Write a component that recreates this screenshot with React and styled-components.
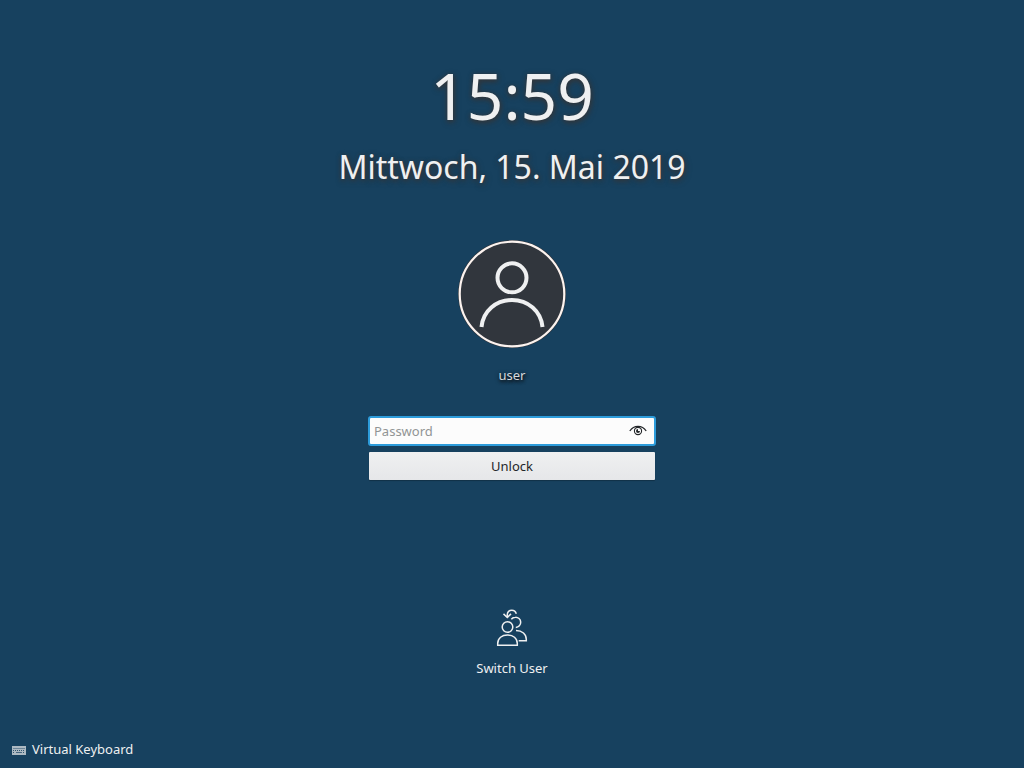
import React from "react";
import styled, { createGlobalStyle } from "styled-components";

const GlobalStyle = createGlobalStyle`
  * { box-sizing: border-box; }
  body { margin: 0; background: #17415f; }
  button, input {
    font: inherit;
    margin: 0;
  }
`;

const Screen = styled.main`
  min-height: 100vh;
  display: flex;
  flex-direction: column;
  align-items: center;
  padding-top: 52px;
  background: #17415f;
  color: #eff0f1;
  font-family: "Noto Sans", sans-serif;
  font-size: 13px;
  line-height: 18px;
`;

const Clock = styled.header`
  display: flex;
  flex-direction: column;
  align-items: center;
  text-shadow: 1px 2px 6px #31363b, 0 1px 4px #31363b;
`;

const Time = styled.time`
  font-size: 64px;
  line-height: 88px;
`;

const DateText = styled.time`
  font-size: 32px;
  line-height: 54px;
`;

const Account = styled.section`
  display: flex;
  flex-direction: column;
  align-items: center;
  gap: 18px;
  margin-top: 46px;
`;

const AvatarDrawing = styled.svg`
  display: block;
  width: 108px;
  height: 108px;
`;

const UserName = styled.span`
  color: #d5d9dd;
  text-shadow: 1px 2px 3px #10171d, 0 1px 4px #10171d;
`;

const LoginForm = styled.form`
  display: flex;
  flex-direction: column;
  gap: 6px;
  width: 288px;
  max-width: 100%;
  margin-top: 32px;
`;

const Field = styled.div`
  display: flex;
  align-items: center;
  height: 30px;
  padding: 0 7px 0 4px;
  border: 2px solid #2d9cdb;
  border-radius: 3px;
  background: #fcfcfc;
`;

const PasswordInput = styled.input`
  flex: 1;
  min-width: 0;
  height: 26px;
  padding: 0;
  border: 0;
  outline: 0;
  background: transparent;
  color: #232629;
  &::placeholder { color: #919495; opacity: 1; }
`;

const RevealButton = styled.button`
  display: flex;
  padding: 0;
  border: 0;
  background: none;
  color: #232629;
`;

const UnlockButton = styled.button`
  height: 28px;
  margin: 0 1px;
  padding: 0;
  border: 0;
  border-radius: 1px;
  background: linear-gradient(#eff0f1, #e6e7e9);
  box-shadow: 0 1px 1px rgba(0, 0, 0, 0.25);
  color: #232629;
`;

const Spacer = styled.div`
  flex: 1;
`;

const ActionButton = styled.button`
  display: flex;
  flex-direction: column;
  align-items: center;
  gap: 11px;
  padding: 0;
  border: 0;
  background: none;
  color: inherit;
`;

const BottomBar = styled.footer`
  align-self: stretch;
  display: flex;
  margin-top: 63px;
  padding: 0 12px 10px;
`;

const KeyboardButton = styled.button`
  display: flex;
  align-items: center;
  gap: 6px;
  padding: 0;
  border: 0;
  background: none;
  color: inherit;
`;

const Avatar = () => (
  <AvatarDrawing viewBox="0 0 108 108" fill="none" aria-hidden="true">
    <circle cx="54" cy="54" r="54" fill="#31363d" />
    <circle cx="54" cy="54" r="52.3" stroke="#fcf3ef" strokeWidth="2.200" />
    <circle cx="54" cy="37.800" r="14.500" stroke="#eff0f1" strokeWidth="4" />
    <path d="M23.500 87C25 71 38 60 54 60S83 71 84.500 87" stroke="#eff0f1" strokeWidth="4" />
  </AvatarDrawing>
);

const EyeIcon = () => (
  <svg width="18" height="14" viewBox="0 0 18 14" fill="none" aria-hidden="true">
    <path d="M.8 7C3 3.600 5.700 2.300 9 2.300S15 3.600 17.200 7" stroke="currentColor" strokeWidth="1.200" />
    <circle cx="9" cy="7" r="3.600" stroke="currentColor" strokeWidth="1.100" />
    <path d="M9 5A2 2 0 1 0 11 7H9Z" fill="currentColor" />
  </svg>
);

const SwitchUserIcon = () => (
  <svg width="32" height="40" viewBox="0 0 32 40" fill="none" stroke="currentColor" strokeWidth="1.500" aria-hidden="true">
    <circle cx="11.500" cy="19" r="5.300" />
    <path d="M1.700 37.300V35.500C1.700 30.300 5.900 27 11.500 27S21.300 30.300 21.300 35.500V37.300Z" />
    <path d="M15.300 11.200C16.500 9.800 18 9.200 19.400 9.200A5.100 5.100 0 0 1 19.800 19.400" />
    <path d="M20 22.400C26.200 22.400 30.300 26.400 30.300 31.400V32.800H22.700" />
    <path d="M20.300 5.800C19.700 3.700 18 2.200 15.800 2.200C13.200 2.200 11.300 4 11.300 6.500V9.200M7.500 5.900L11.300 9.500L15 5.900" />
  </svg>
);

const KeyboardIcon = () => (
  <svg width="14" height="12" viewBox="0 0 14 12" aria-hidden="true">
    <rect y="3" width="14" height="9" fill="#adb9c2" />
    <path d="M1 5.500H13" stroke="#6c8497" />
    <path d="M1 7.500H13M1 9.500H3M11 9.500H13" stroke="#31556f" strokeDasharray="1 1" />
    <path d="M4 9.500H10" stroke="#476780" />
  </svg>
);

export default function App() {
  return (
    <>
      <GlobalStyle />
      <Screen>
        <Clock>
          <Time dateTime="15:59">15:59</Time>
          <DateText dateTime="2019-05-15">Mittwoch, 15. Mai 2019</DateText>
        </Clock>
        <Account>
          <Avatar />
          <UserName>user</UserName>
        </Account>
        <LoginForm onSubmit={(event) => event.preventDefault()}>
          <Field>
            <PasswordInput type="password" placeholder="Password" aria-label="Password" />
            <RevealButton type="button" aria-label="Show password">
              <EyeIcon />
            </RevealButton>
          </Field>
          <UnlockButton type="submit">Unlock</UnlockButton>
        </LoginForm>
        <Spacer />
        <ActionButton type="button">
          <SwitchUserIcon />
          Switch User
        </ActionButton>
        <BottomBar>
          <KeyboardButton type="button">
            <KeyboardIcon />
            Virtual Keyboard
          </KeyboardButton>
        </BottomBar>
      </Screen>
    </>
  );
}
